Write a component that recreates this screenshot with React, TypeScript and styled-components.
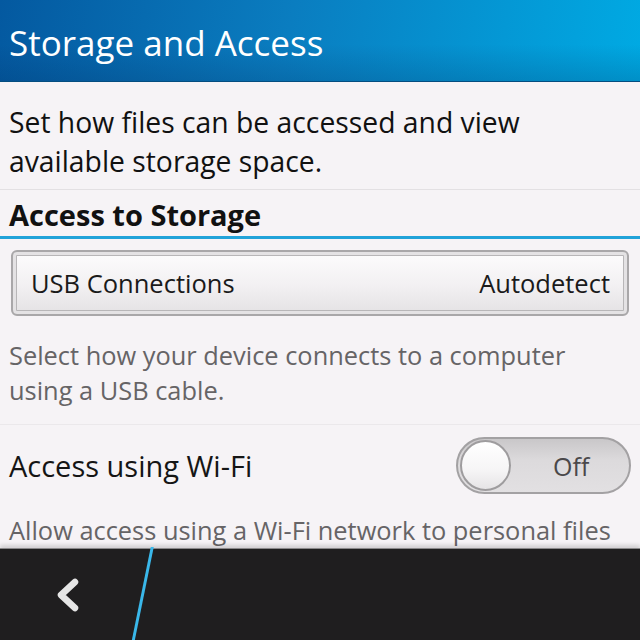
import styled, { createGlobalStyle } from "styled-components"

const GlobalStyle = createGlobalStyle`
  html, body {
    margin: 0;
    padding: 0;
    background: #f6f3f6;
  }
  body {
    font-family: "Open Sans", "Noto Sans", sans-serif;
    color: #151515;
  }
`

const App = () => {
  return (
    <>
      <GlobalStyle />
      <Screen>
        <Header>
          <Title>Storage and Access</Title>
        </Header>
        <Content>
          <Intro>Set how files can be accessed and view available storage space.</Intro>
          <SectionTitle>Access to Storage</SectionTitle>
          <DropdownWrap>
            <Dropdown>
              <span>USB Connections</span>
              <span>Autodetect</span>
            </Dropdown>
          </DropdownWrap>
          <Hint>Select how your device connects to a computer using a USB cable.</Hint>
          <ToggleRow>
            <RowLabel>Access using Wi-Fi</RowLabel>
            <Toggle>
              <Knob />
              <ToggleText>Off</ToggleText>
            </Toggle>
          </ToggleRow>
          <Hint $tight>Allow access using a Wi-Fi network to personal files</Hint>
        </Content>
        <ActionBar>
          <BackButton>
            <svg width="30" height="36" viewBox="0 0 30 36">
              <path
                d="M22 5 L8 18 L22 31"
                fill="none"
                stroke="#e6e6e6"
                strokeWidth="6.5"
                strokeLinecap="round"
                strokeLinejoin="round"
              />
            </svg>
          </BackButton>
          <Slash />
        </ActionBar>
      </Screen>
    </>
  )
}

const Screen = styled.div`
  width: 640px;
  height: 640px;
  display: flex;
  flex-direction: column;
  overflow: hidden;
  background: #f6f3f6;
`

const Header = styled.header`
  height: 82px;
  flex-shrink: 0;
  display: flex;
  align-items: center;
  padding: 4px 9px 0;
  box-sizing: border-box;
  background:
    linear-gradient(180deg, rgba(255, 255, 255, 0) 55%, rgba(0, 40, 90, 0.2) 100%),
    linear-gradient(100deg, #0459a0 0%, #0a7dc0 45%, #00aae3 100%);
  border-bottom: 1px solid #044d80;
`

const Title = styled.h1`
  margin: 0;
  font-weight: 400;
  font-size: 35px;
  color: #ffffff;
`

const Content = styled.main`
  flex: 1;
  overflow: hidden;
  display: flex;
  flex-direction: column;
`

const Intro = styled.p`
  margin: 0;
  padding: 21px 60px 8px 9px;
  font-size: 28.3px;
  line-height: 39px;
  color: #111;
  border-bottom: 1px solid #e3e0e3;
`

const SectionTitle = styled.h2`
  margin: 0;
  padding: 8px 9px 4px;
  font-size: 29px;
  font-weight: 700;
  line-height: 34px;
  color: #111;
  border-bottom: 3px solid #22a3d9;
`

const DropdownWrap = styled.div`
  padding: 11px 11px 0 11px;
`

const Dropdown = styled.div`
  height: 66px;
  display: flex;
  align-items: center;
  justify-content: space-between;
  padding: 0 17px 0 18px;
  box-sizing: border-box;
  border: 2px solid #a9a7a9;
  border-radius: 6px;
  box-shadow: inset 0 0 0 3px #e4e2e4, inset 0 0 0 4px #b8b6b8;
  background: linear-gradient(180deg, #fdfcfd 0%, #f2f0f2 55%, #e4e2e4 100%);
  font-size: 25.5px;
  color: #1a1a1a;
`

const Hint = styled.p<{ $tight?: boolean }>`
  margin: 0;
  padding: ${(p) => (p.$tight ? "9px 9px 0" : "22px 40px 16px 9px")};
  font-size: 25.4px;
  line-height: 35px;
  color: #666466;
  white-space: ${(p) => (p.$tight ? "nowrap" : "normal")};
  ${(p) => (p.$tight ? "" : "border-bottom: 1px solid #ebe8eb;")}
`

const ToggleRow = styled.div`
  display: flex;
  align-items: center;
  justify-content: space-between;
  padding: 12px 9px 10px 9px;
`

const RowLabel = styled.span`
  font-size: 29px;
  color: #151515;
`

const Toggle = styled.div`
  width: 175px;
  height: 57px;
  box-sizing: border-box;
  border-radius: 29px;
  border: 2px solid #a3a1a3;
  background: linear-gradient(180deg, #c9c7c9 0%, #dcdadc 40%, #e2e0e2 100%);
  display: flex;
  align-items: center;
  position: relative;
`

const Knob = styled.div`
  position: absolute;
  left: 2px;
  top: 1px;
  width: 51px;
  height: 51px;
  border-radius: 50%;
  box-sizing: border-box;
  border: 2px solid #9e9c9e;
  background: linear-gradient(180deg, #ffffff 0%, #f6f5f6 60%, #e6e4e6 100%);
`

const ToggleText = styled.span`
  margin-left: 95px;
  font-size: 25px;
  color: #4a484a;
`

const ActionBar = styled.footer`
  height: 91px;
  flex-shrink: 0;
  position: relative;
  display: flex;
  align-items: center;
  background: #1f1e1f;
  border-top: 1px solid #8a888a;
  box-shadow: 0 -3px 4px rgba(0, 0, 0, 0.15);
`

const BackButton = styled.div`
  width: 136px;
  height: 100%;
  display: flex;
  align-items: center;
  justify-content: center;
`

const Slash = styled.div`
  position: absolute;
  left: 141px;
  top: -2px;
  width: 3px;
  height: 96px;
  background: #3ab8ea;
  transform: skewX(-11.5deg);
`

export default App
